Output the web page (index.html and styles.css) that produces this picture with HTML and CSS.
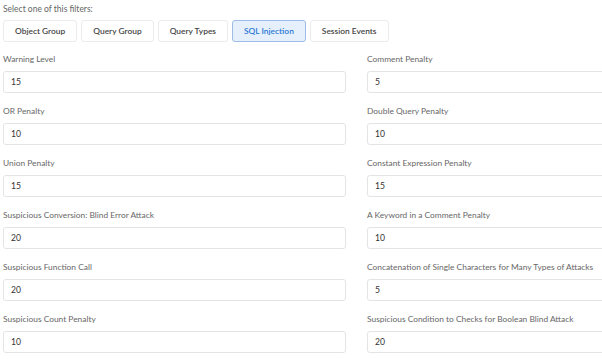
FILE: index.html
```html
<!DOCTYPE html>
<html lang="en">

<head>
    <meta charset="UTF-8">
    <meta name="viewport" content="width=device-width, initial-scale=1.0">
    <title>SQL Injection Filters</title>
    <link rel="stylesheet" href="styles.css">
</head>

<body>

    <div class="page">
        <!-- Filter selector -->
        <p class="filter-title">Select one of this filters:</p>
        <div class="filter-tabs">
            <button class="tab">Object Group</button>
            <button class="tab">Query Group</button>
            <button class="tab">Query Types</button>
            <button class="tab active">SQL Injection</button>
            <button class="tab">Session Events</button>
        </div>

        <!-- SQL Injection settings -->
        <div class="form-grid">
            <div class="form-group">
                <label for="warningLevel">Warning Level</label>
                <input type="text" id="warningLevel" value="15">
            </div>
            <div class="form-group">
                <label for="commentPenalty">Comment Penalty</label>
                <input type="text" id="commentPenalty" value="5">
            </div>
            <div class="form-group">
                <label for="orPenalty">OR Penalty</label>
                <input type="text" id="orPenalty" value="10">
            </div>
            <div class="form-group">
                <label for="doubleQuery">Double Query Penalty</label>
                <input type="text" id="doubleQuery" value="10">
            </div>
            <div class="form-group">
                <label for="unionPenalty">Union Penalty</label>
                <input type="text" id="unionPenalty" value="15">
            </div>
            <div class="form-group">
                <label for="constantExpr">Constant Expression Penalty</label>
                <input type="text" id="constantExpr" value="15">
            </div>
            <div class="form-group">
                <label for="blindError">Suspicious Conversion: Blind Error Attack</label>
                <input type="text" id="blindError" value="20">
            </div>
            <div class="form-group">
                <label for="keywordComment">A Keyword in a Comment Penalty</label>
                <input type="text" id="keywordComment" value="10">
            </div>
            <div class="form-group">
                <label for="functionCall">Suspicious Function Call</label>
                <input type="text" id="functionCall" value="20">
            </div>
            <div class="form-group">
                <label for="concatChars">Concatenation of Single Characters for Many Types of Attacks</label>
                <input type="text" id="concatChars" value="5">
            </div>
            <div class="form-group">
                <label for="countPenalty">Suspicious Count Penalty</label>
                <input type="text" id="countPenalty" value="10">
            </div>
            <div class="form-group">
                <label for="booleanBlind">Suspicious Condition to Checks for Boolean Blind Attack</label>
                <input type="text" id="booleanBlind" value="20">
            </div>
        </div>
    </div>

</body>

</html>
```

FILE: styles.css
```css
body {
    font-family: 'Lato', 'Noto Sans', sans-serif;
    margin: 0;
    padding: 0;
    background-color: #fff;
    color: #333;
    overflow: hidden;
}

.page {
    padding: 3px 0 0 3px;
    width: 720px;
}

.filter-title {
    margin: 0;
    font-size: 8.5px;
    line-height: 12px;
    color: #666;
}

.filter-tabs {
    display: flex;
    gap: 4px;
    margin-top: 5px;
}

.tab {
    font-family: inherit;
    font-size: 8.4px;
    font-weight: 600;
    color: #454545;
    background-color: #fff;
    border: 1px solid #eaecee;
    border-radius: 3px;
    height: 22px;
    padding: 0 11px;
    cursor: pointer;
}

.tab.active {
    background-color: #e6f0fc;
    border-color: #9dbde6;
    color: #2a78d4;
}

.form-grid {
    display: grid;
    grid-template-columns: 343px 343px;
    column-gap: 21px;
    margin-top: 11px;
}

.form-group {
    display: flex;
    flex-direction: column;
    height: 52px;
}

.form-group label {
    font-size: 8.4px;
    line-height: 12px;
    color: #676767;
    margin-bottom: 6px;
}

.form-group input {
    font-family: inherit;
    font-size: 8.6px;
    color: #333;
    height: 22px;
    box-sizing: border-box;
    padding: 0 7px;
    border: 1px solid #e2e4e6;
    border-radius: 3px;
    outline: none;
}
```
